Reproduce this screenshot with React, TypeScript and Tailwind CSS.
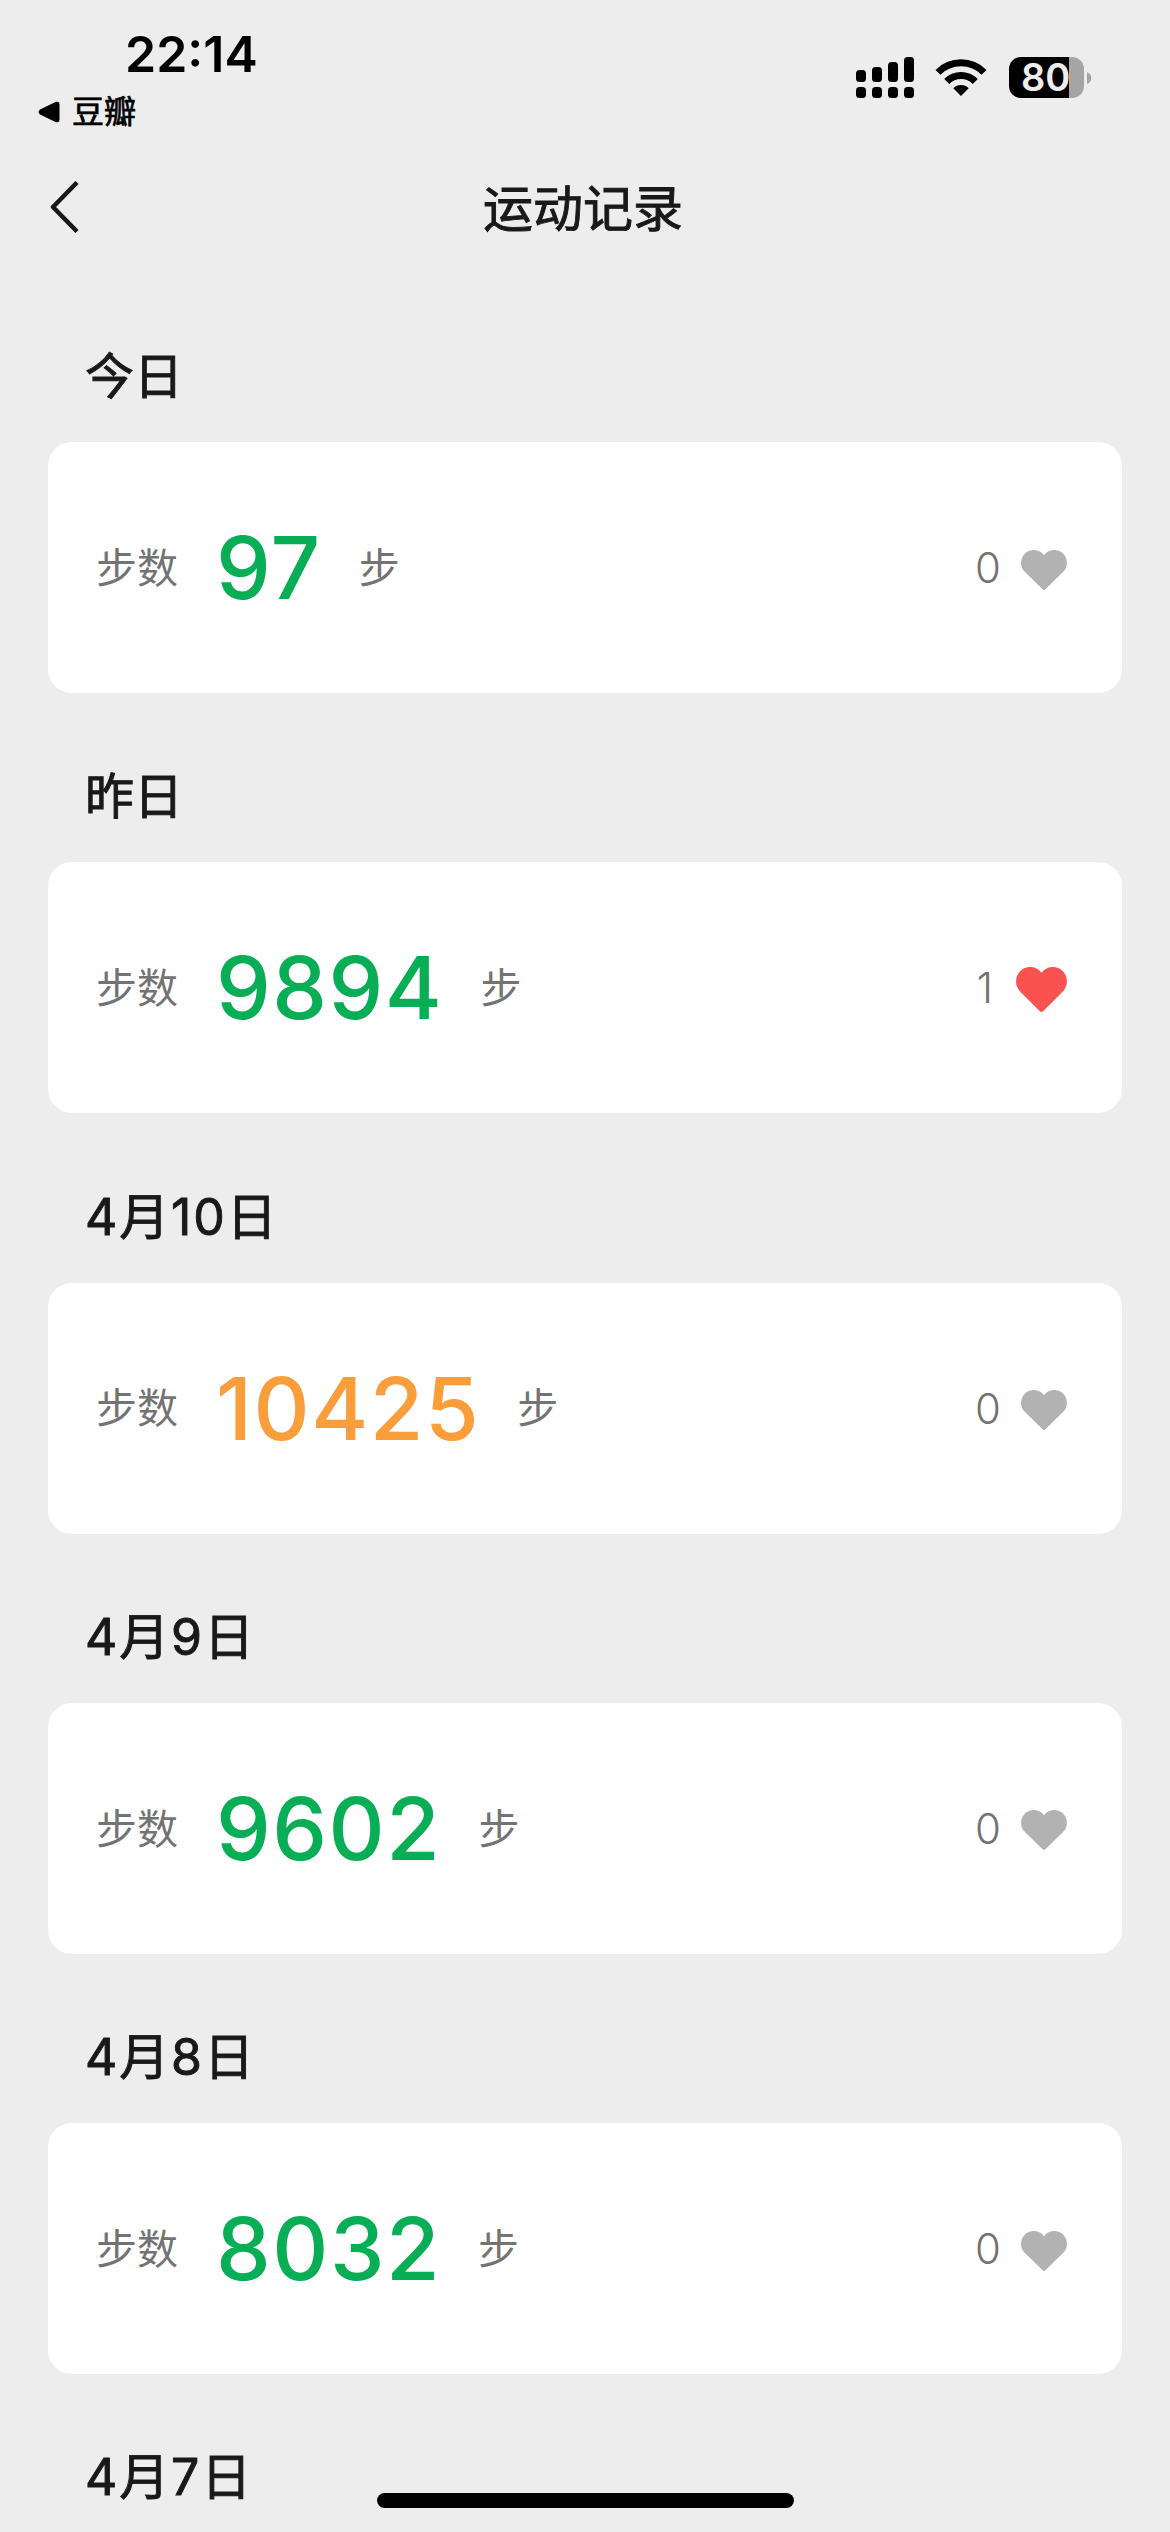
const records = [
  { date: '今日', steps: 97, likes: 0 },
  { date: '昨日', steps: 9894, likes: 1 },
  { date: '4月10日', steps: 10425, likes: 0 },
  { date: '4月9日', steps: 9602, likes: 0 },
  { date: '4月8日', steps: 8032, likes: 0 },
];

function SignalIcon() {
  return (
    <svg width="58" height="42" viewBox="0 0 58 42" fill="#000">
      <rect x="0" y="13" width="10" height="12" rx="3.5" />
      <rect x="16" y="10" width="10" height="15" rx="3.5" />
      <rect x="32" y="5" width="10" height="20" rx="3.5" />
      <rect x="48" y="0" width="10" height="25" rx="3.5" />
      <rect x="0" y="30" width="10" height="11" rx="3.5" />
      <rect x="16" y="30" width="10" height="11" rx="3.5" />
      <rect x="32" y="30" width="10" height="11" rx="3.5" />
      <rect x="48" y="30" width="10" height="11" rx="3.5" />
    </svg>
  );
}

function WifiIcon() {
  return (
    <svg width="52" height="42" viewBox="0 0 52 42" fill="none" stroke="#000" strokeWidth="7">
      <path d="M3 15.4A32.5 32.5 0 0 1 49 15.4" />
      <path d="M11.7 24.5A20.2 20.2 0 0 1 40.3 24.5" />
      <path d="M18.3 31.2A11 11 0 0 1 33.7 31.2L26 39Z" fill="#000" stroke="none" />
    </svg>
  );
}

function Battery() {
  return (
    <div className="flex items-center gap-[3px]">
      <div className="flex h-[41px] w-[75px] rounded-[12px] bg-[linear-gradient(to_right,#000_60px,#a5a5a5_60px)] pl-[12px]">
        <span className="text-[38px] leading-[41px] font-semibold text-[#ededed]">80</span>
      </div>
      <svg width="5" height="12" viewBox="0 0 5 12" fill="#a5a5a5">
        <path d="M0 0Q4.300 2 4.300 6T0 12Z" />
      </svg>
    </div>
  );
}

function Heart({ liked }: { liked: boolean }) {
  return (
    <svg
      className={liked ? 'mt-[4px] h-[45px] w-[51px] text-[#fa5151]' : 'mt-[4px] h-[40px] w-[46px] text-[#b2b2b2]'}
      viewBox="0 0 46 40"
      preserveAspectRatio="none"
      fill="currentColor"
    >
      <path d="M23 5.200C18.500-1.200 8.800-1.900 3.500 4C-1.200 9.300-1 17 3.700 21.800L21.600 39.300Q23 40.600 24.400 39.300L42.300 21.800C47 17 47.200 9.300 42.500 4C37.200-1.900 27.500-1.200 23 5.200Z" />
    </svg>
  );
}

function DateHeading({ children }: { children: string }) {
  return (
    <h2
      className={
        /\d/.test(children)
          ? 'h-[169px] pt-[69px] pl-[37px] text-[50px] leading-[68px] tracking-[1.9px] text-[#191919] [-webkit-text-stroke:0.9px_#191919]'
          : 'h-[169px] pt-[70px] pl-[37px] text-[49px] leading-[68px] text-[#191919] [-webkit-text-stroke:0.9px_#191919]'
      }
    >
      {children}
    </h2>
  );
}

export default function App() {
  return (
    <div className="relative h-[2532px] w-[1170px] overflow-hidden bg-[#ededed] font-['Inter','Noto_Sans_CJK_SC',sans-serif]">
      <header className="h-[273px]">
        <div className="flex h-[140px] justify-between">
          <div className="pl-[38px]">
            <div className="mt-[24px] h-[60px] pl-[87px] text-[50px] leading-[60px] font-semibold">22:14</div>
            <div className="flex h-[56px] items-center text-[32px] leading-[56px] [-webkit-text-stroke:0.7px_#000]">
              <svg width="22" height="22" viewBox="0 0 22 22" fill="#000">
                <path d="M2 8.500L18 .800Q21.500 0 21.500 3V19Q21.500 22 18 21.200L2 13.500Q-1 11 2 8.500Z" />
              </svg>
              <span className="ml-[12px]">豆瓣</span>
            </div>
          </div>
          <div className="flex items-start pt-[57px] pr-[78px]">
            <SignalIcon />
            <div className="mr-[22px] ml-[21px]">
              <WifiIcon />
            </div>
            <Battery />
          </div>
        </div>
        <div className="grid h-[133px] grid-cols-[1fr_auto_1fr] items-start">
          <svg className="mt-[41px] ml-[50px]" width="30" height="52" viewBox="0 0 30 52" fill="none" stroke="#191919" strokeWidth="4.5" strokeLinejoin="round">
            <path d="M27 1.500L3 26L27 50.500" />
          </svg>
          <h1 className="mt-[35px] mr-[4px] text-[50px] leading-[68px] text-[#191919] [-webkit-text-stroke:0.9px_#191919]">
            运动记录
          </h1>
        </div>
      </header>

      <main className="px-[48px]">
        {records.map((r) => (
          <section key={r.date} className="h-[420.3px]">
            <DateHeading>{r.date}</DateHeading>
            <div className="flex h-[251px] items-center justify-between rounded-[24px] bg-white pr-[55px] pl-[48px] text-[41px] text-[#737373]">
              <div className="flex items-center">
                <span className="pt-[2px]">步数</span>
                <span
                  className={
                    r.steps >= 10000
                      ? 'mr-[37px] ml-[38px] pt-[1px] text-[87px] leading-[100px] font-medium tracking-[1.5px] text-[#fa9d3b]'
                      : 'mr-[37px] ml-[38px] pt-[1px] text-[87px] leading-[100px] font-medium tracking-[1.5px] text-[#07ae56]'
                  }
                >
                  {r.steps}
                </span>
                <span className="pt-[2px]">步</span>
              </div>
              <div className="flex items-center">
                <span className={r.likes > 0 ? 'mr-[23px] text-[42px] font-light' : 'mr-[20px] text-[42px] font-light'}>
                  {r.likes}
                </span>
                <Heart liked={r.likes > 0} />
              </div>
            </div>
          </section>
        ))}
        <DateHeading>4月7日</DateHeading>
      </main>

      <div className="absolute bottom-[24px] left-[377px] h-[15px] w-[417px] rounded-full bg-black" />
    </div>
  );
}
